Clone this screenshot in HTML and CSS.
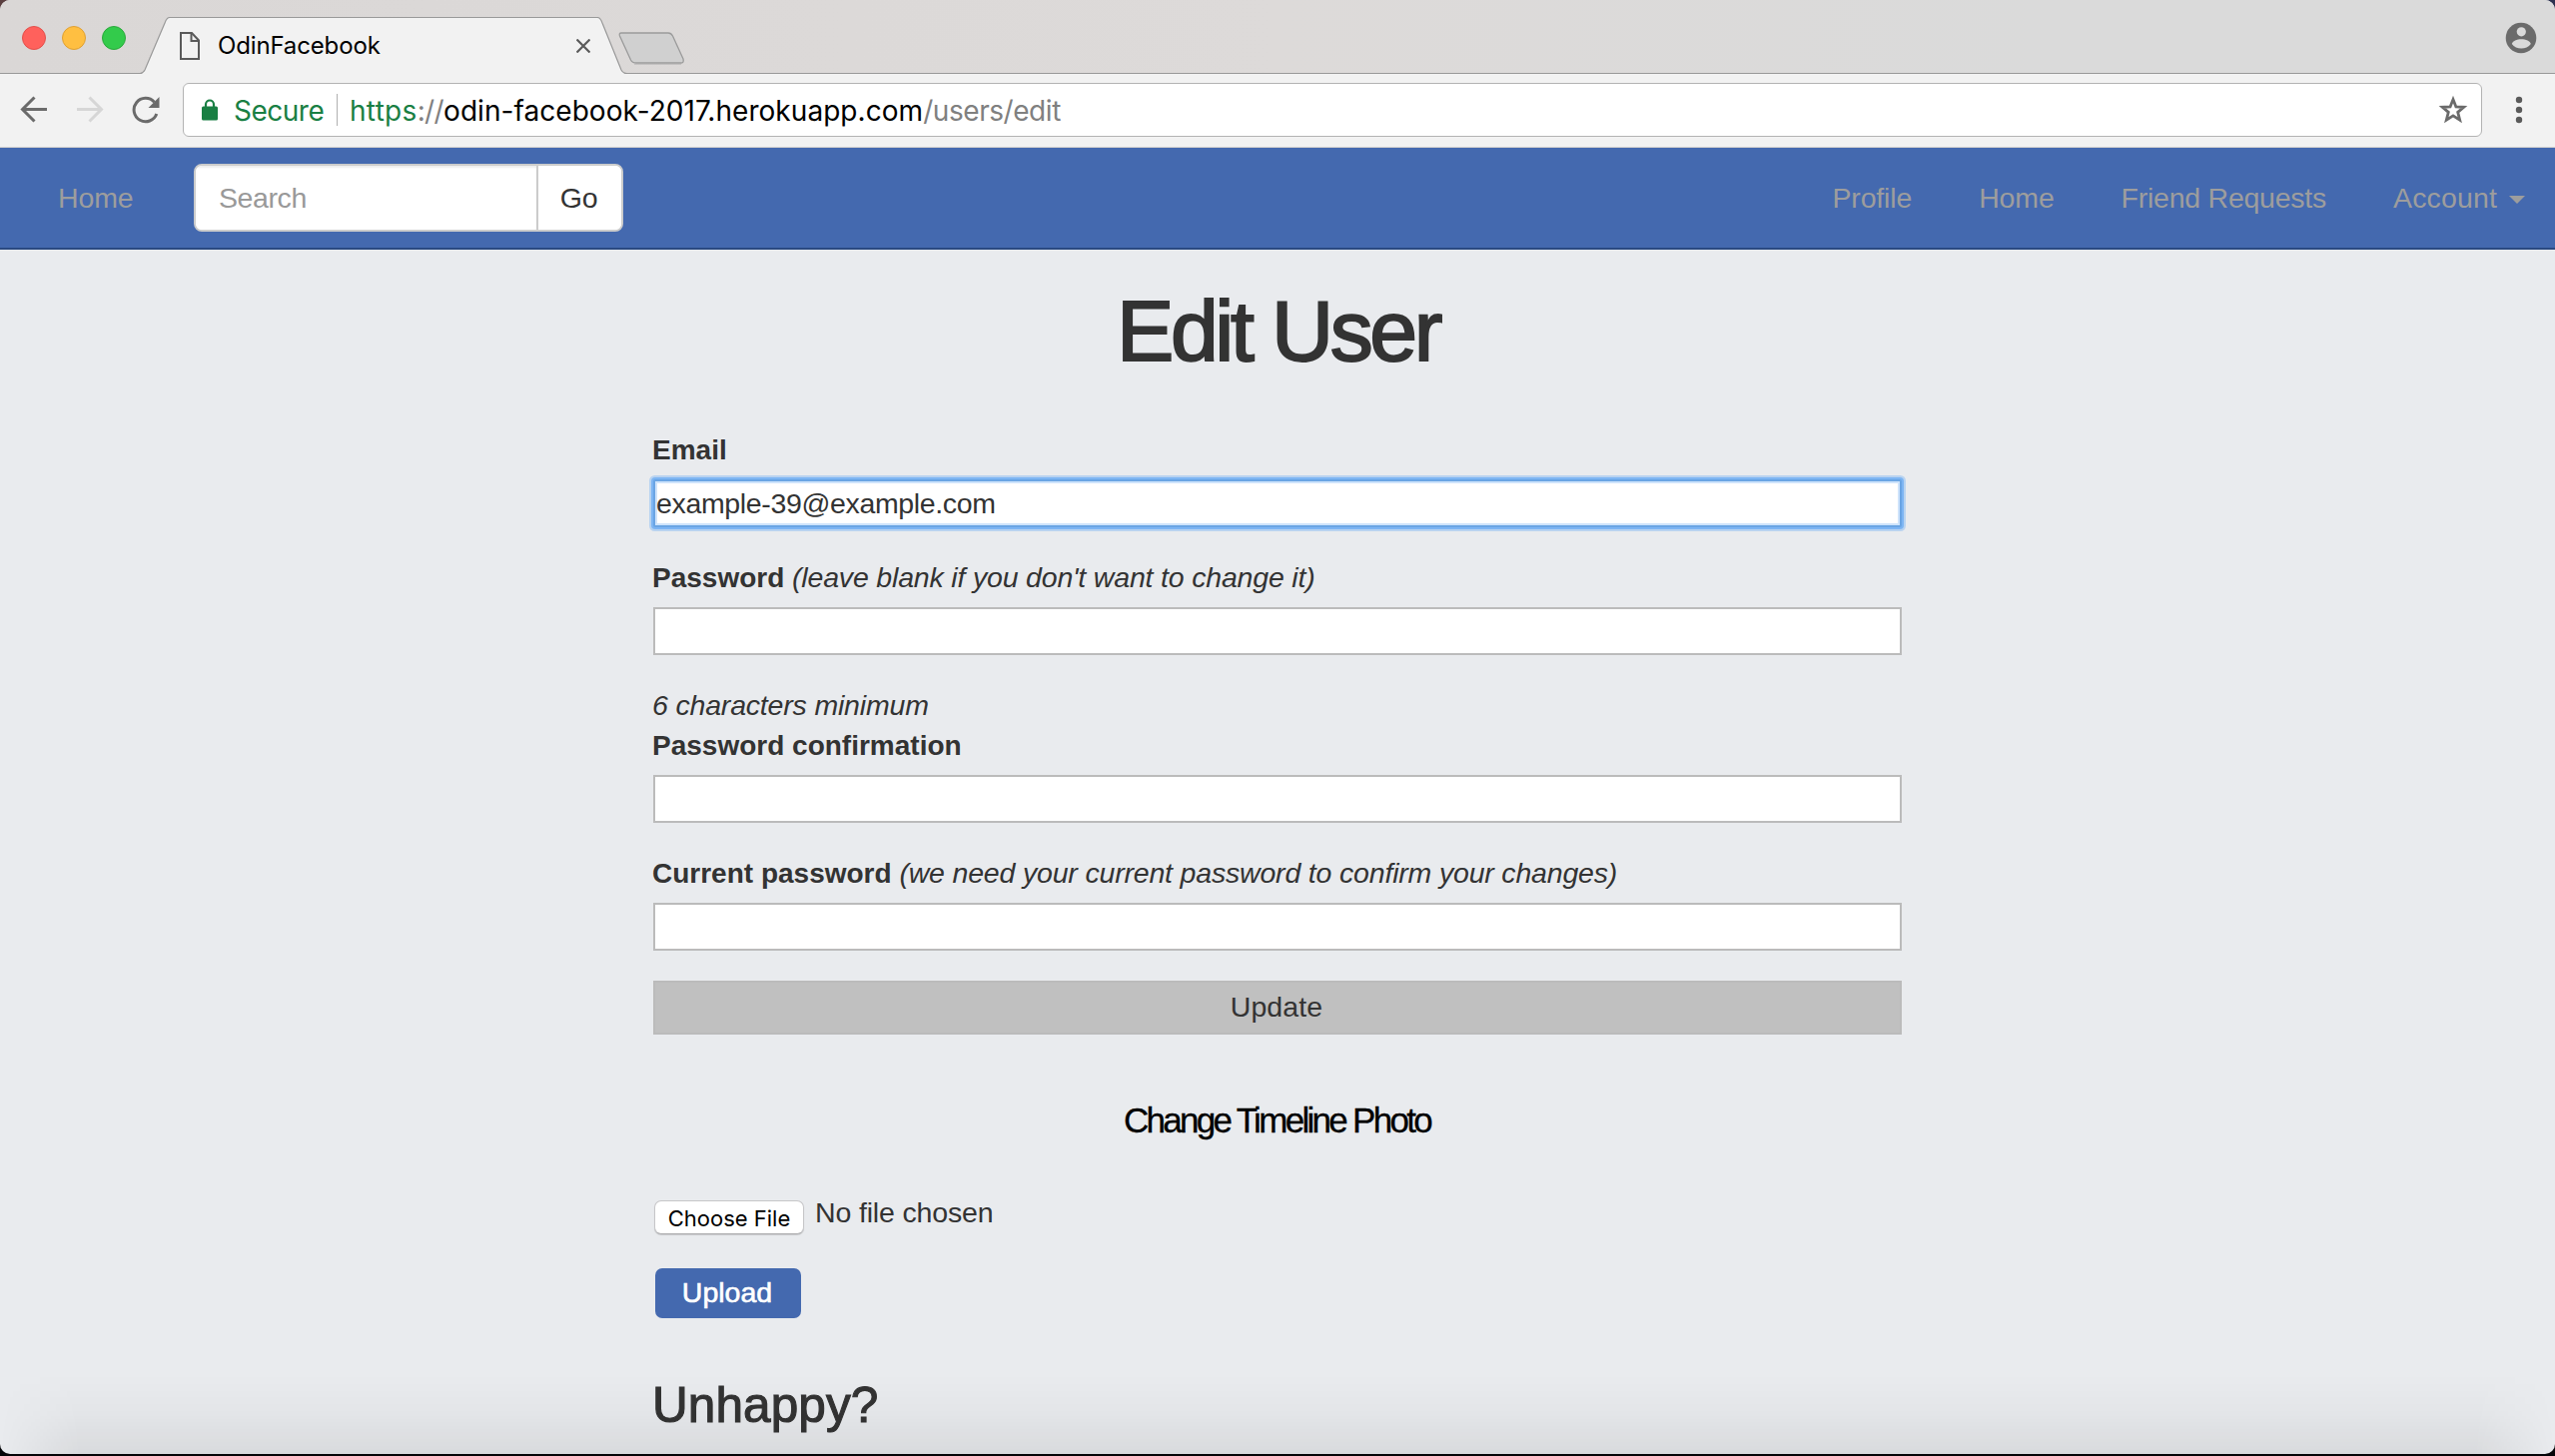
FILE: index.html
```
<!DOCTYPE html>
<html lang="en">
<head>
<meta charset="utf-8">
<title>OdinFacebook</title>
<link rel="stylesheet" href="styles.css">
</head>
<body>
<div class="window">
  <div class="tab-strip">
    <div class="lights">
      <span class="light light-close"></span>
      <span class="light light-min"></span>
      <span class="light light-max"></span>
    </div>
    <div class="tab">
      <svg class="tab-shape" width="488" height="58" viewBox="0 0 488 58">
        <path d="M0 58 Q3 57 5 53 L25 6 Q27 .5 30 .5 H458 Q461 .5 463 6 L482 53 Q484 57 488 58Z" fill="#f2f2f2"/>
        <path d="M0 56.5 Q3.500 56 5 53 L25 6 Q27 .5 30 .5 H458 Q461 .5 463 6 L482 53 Q484 56.500 488 56.5" fill="none" stroke="#999" stroke-width="1.2"/>
      </svg>
      <svg class="tab-page" width="20" height="28" viewBox="0 0 20 28" fill="none" stroke="#5a5a5a" stroke-width="2">
        <path d="M1 1H12L19 8.500V27H1Z"/><path d="M11.500 1V9H19"/>
      </svg>
      <span class="tab-title">OdinFacebook</span>
      <svg class="tab-close" width="14" height="14" viewBox="0 0 14 14" stroke="#5a5a5a" stroke-width="2.200"><path d="M.5 .5 13.500 13.500M13.500 .5.5 13.500"/></svg>
    </div>
    <svg class="new-tab" width="68" height="34" viewBox="0 0 68 34">
      <path d="M3 1H50Q53 1 54.500 4L65 27Q66 31 63 31H18Q14 31 12.500 28L1.500 4Q.5 1 3 1Z" fill="#d0d0d0" stroke="#9b9b9b" stroke-width="1.300"/>
      <path d="M16 32.500H63" stroke="#c4c2c2"/>
    </svg>
    <svg class="avatar" width="32" height="32" viewBox="0 0 32 32">
      <circle cx="16" cy="16" r="15.300" fill="#6b6b6b"/>
      <circle cx="16.300" cy="9.800" r="4.600" fill="#dadada"/>
      <path d="M6.800 22C8 15.500 24.600 15.500 25.800 22C21.500 28 11 28 6.800 22Z" fill="#dadada"/>
    </svg>
  </div>

  <div class="toolbar">
    <svg class="back" width="28" height="28" viewBox="0 0 28 28" fill="none" stroke="#6b6b6b" stroke-width="3"><path d="M27 13.500H3M14.500 1.500 2.500 13.500 14.500 25.500"/></svg>
    <svg class="forward" width="28" height="28" viewBox="0 0 28 28" fill="none" stroke="#d6d6d6" stroke-width="3"><path d="M1 13.500H25M13.500 1.500 25.500 13.500 13.500 25.500"/></svg>
    <svg class="reload" width="28" height="28" viewBox="0 0 28 28">
      <path d="M22.500 6.200A11.700 11.700 0 1 0 24.800 18" fill="none" stroke="#6b6b6b" stroke-width="3"/>
      <path d="M27.500 1V12H16.500Z" fill="#6b6b6b"/>
    </svg>
    <div class="omnibox">
      <svg class="lock" width="16" height="22" viewBox="0 0 16 22">
        <rect y="7.500" width="16" height="14" rx="1.500" fill="#197f43"/>
        <path d="M4 9V5.500a4 4 0 0 1 8 0V9" fill="none" stroke="#197f43" stroke-width="2.200"/>
      </svg>
      <span class="secure">Secure</span>
      <span class="divider"></span>
      <span class="url"><span class="scheme">https</span><span class="slashes">://</span><span class="host">odin-facebook-2017.herokuapp.com</span><span class="path">/users/edit</span></span>
      <svg class="star" width="30" height="30" viewBox="0 0 30 30" fill="none" stroke="#6b6b6b" stroke-width="2.800"><path d="M15 4.500 17.900 11.900 25.700 12.300 19.700 17.300 21.700 25.100 15 20.800 8.300 25.100 10.300 17.300 4.300 12.300 12.100 11.900Z"/></svg>
    </div>
    <svg class="kebab" width="8" height="28" viewBox="0 0 8 28" fill="#5a5a5a"><circle cx="4" cy="4" r="3.200"/><circle cx="4" cy="14" r="3.200"/><circle cx="4" cy="24" r="3.200"/></svg>
  </div>

  <nav class="navbar">
    <a class="nav-link brand">Home</a>
    <form class="search">
      <input class="search-input" type="text" placeholder="Search">
      <button class="search-go" type="button">Go</button>
    </form>
    <div class="nav-right">
      <a class="nav-link profile">Profile</a>
      <a class="nav-link nav-home">Home</a>
      <a class="nav-link requests">Friend Requests</a>
      <a class="nav-link account">Account<span class="caret"></span></a>
    </div>
  </nav>

  <main class="page">
    <h1 class="title">Edit User</h1>
    <form class="form">
      <div class="label"><b>Email</b></div>
      <input class="field focused" type="text" value="example-39@example.com">
      <div class="label"><b>Password</b> <i>(leave blank if you don't want to change it)</i></div>
      <input class="field" type="password">
      <div class="label"><i>6 characters minimum</i></div>
      <div class="label"><b>Password confirmation</b></div>
      <input class="field" type="password">
      <div class="label"><b>Current password</b> <i>(we need your current password to confirm your changes)</i></div>
      <input class="field" type="password">
      <button class="update" type="button">Update</button>
    </form>
    <h4 class="subtitle">Change Timeline Photo</h4>
    <div class="file-row">
      <button class="choose" type="button">Choose File</button>
      <span class="file-name">No file chosen</span>
    </div>
    <button class="upload" type="button">Upload</button>
    <h3 class="unhappy">Unhappy?</h3>
  </main>
  <div class="shade"></div>
</div>
</body>
</html>
```
FILE: styles.css
```
* { box-sizing: border-box; }
html { background: #050508; }
body {
  margin: 0;
  width: 2558px;
  height: 1458px;
  overflow: hidden;
  background: linear-gradient(90deg, #5b3f40, #2c3150) top / 100% 12px no-repeat, #050508;
  font: 28.5px/40px "Liberation Sans", Arial, sans-serif;
  letter-spacing: -0.15px;
  color: #333;
}
svg { display: block; flex: none; }
button, input { font: inherit; letter-spacing: inherit; color: inherit; margin: 0; padding: 0; display: block; border-radius: 0; }

.window {
  position: relative;
  height: 1456px;
  overflow: hidden;
  border-radius: 10px;
  background: #e9ebee;
}

/* browser tab strip */
.tab-strip {
  height: 74px;
  display: flex;
  align-items: flex-start;
  padding-left: 22px;
  background: linear-gradient(90deg, #dad7d6, #dddad9 50%, #dadada 80%);
  border-bottom: 1px solid #999;
  font-family: Inter, sans-serif;
}
.lights { display: flex; gap: 16px; padding-top: 26px; width: 118px; }
.light { width: 24px; height: 24px; border-radius: 50%; border: 1px solid; }
.light-close { background: #ff615c; border-color: #e2504b; }
.light-min { background: #ffbf41; border-color: #dfa033; }
.light-max { background: #33cb4b; border-color: #2aa93b; }
.tab { position: relative; width: 488px; height: 58px; margin-top: 17px; display: flex; }
.tab-shape { position: absolute; left: 0; top: 0; }
.tab-page { position: relative; margin: 15px 0 0 40px; }
.tab-title {
  position: relative;
  width: 377px;
  padding-left: 18px;
  font-size: 24px;
  line-height: 58px;
  letter-spacing: -0.15px;
  color: #000;
}
.tab-close { position: relative; margin-top: 22px; }
.new-tab { margin: 32px 0 0 -9px; }
.avatar { margin: 22px 18px 0 auto; }

/* browser toolbar */
.toolbar {
  height: 74px;
  display: flex;
  align-items: center;
  padding: 0 32px 2px 20px;
  background: #f2f2f2;
  border-bottom: 1px solid #d0cfcf;
  font-family: Inter, sans-serif;
  font-size: 28px;
}
.forward { margin-left: 28px; }
.reload { margin-left: 28px; }
.omnibox {
  width: 2302px;
  height: 54px;
  margin-left: 23px;
  display: flex;
  align-items: center;
  background: #fff;
  border: 1px solid #b3b3b3;
  border-radius: 6px;
}
.lock { margin-left: 18px; }
.secure { margin-left: 15px; width: 104px; padding: 2px 0 0 1px; color: #197f43; letter-spacing: -0.5px; }
.divider { width: 1px; height: 32px; background: #b0b0b0; }
.url { margin-left: 12px; padding-top: 2px; display: flex; white-space: nowrap; }
.scheme { color: #197f43; letter-spacing: 0.3px; }
.slashes { color: #808080; letter-spacing: -0.6px; }
.host { color: #000; letter-spacing: 0.05px; }
.path { color: #808080; letter-spacing: -0.44px; }
.star { margin-left: auto; margin-right: 13px; }
.kebab { margin-left: 33px; }

/* site navigation */
.navbar {
  height: 102px;
  display: flex;
  align-items: center;
  padding: 0 30px 0 58px;
  background: #4469af;
  border-bottom: 2px solid #2b4a82;
}
.nav-link { color: #9d9d9d; }
.brand { width: 136px; }
.search {
  display: flex;
  width: 430px;
  height: 68px;
  background: #fff;
  border: 2px solid #ccc;
  border-radius: 8px;
  overflow: hidden;
}
.search-input {
  width: 343px;
  border: 0;
  border-right: 2px solid #ccc;
  padding-left: 23px;
  letter-spacing: -0.4px;
  background: #fff;
  box-shadow: inset 0 2px 2px rgba(0, 0, 0, 0.075);
}
.search-input::placeholder { color: #999; opacity: 1; }
.search-go { flex: 1; border: 0; padding-right: 2px; background: #fff; }
.nav-right { margin-left: auto; display: flex; gap: 67px; }
.requests { letter-spacing: -0.25px; }
.account { display: flex; align-items: center; letter-spacing: 0.15px; }
.caret { margin: 4px 0 0 12px; border: 8px solid transparent; border-top-color: #9d9d9d; border-bottom: 0; }

/* page content */
.page { width: 1253px; margin: 0 auto 0 653px; }
.title {
  margin: 33px 0 51px;
  font-size: 86px;
  line-height: 96px;
  font-weight: 400;
  letter-spacing: -3.4px;
  text-align: center;
  -webkit-text-stroke: 2px #333;
}
.form { display: flex; flex-direction: column; }
.label { height: 40px; white-space: nowrap; }
.label b { font-size: 28px; letter-spacing: 0; }
.label i { letter-spacing: -0.18px; }
.field {
  width: 1250px;
  height: 48px;
  margin: 10px 0 30px 1px;
  padding: 0 2px;
  border: 2px solid #bbb;
  background: #fff;
}
.focused {
  padding-left: 1px;
  letter-spacing: -0.35px;
  outline: 0;
  border: 2px solid #6aa5e4;
  border-radius: 2px;
  box-shadow: 0 0 0 2px #7db5f3, 0 0 0 4px #b9d3f0, inset 0 0 0 2px #cfe4fb;
}
.update {
  width: 1250px;
  height: 54px;
  margin-left: 1px;
  padding: 0 2px 2px 0;
  border: 2px solid #bbb;
  background: #c0c0c0;
  letter-spacing: 0.1px;
}
.subtitle {
  margin: 64px 2px 58px 0;
  font-size: 35px;
  line-height: 44px;
  font-weight: 400;
  letter-spacing: -2.7px;
  text-align: center;
  color: #000;
  -webkit-text-stroke: 0.3px #000;
}
.file-row { display: flex; align-items: flex-start; margin-left: 2px; height: 34px; }
.choose {
  width: 150px;
  height: 34px;
  background: #fff;
  border: 1px solid #c6c6c8;
  border-bottom-color: #adadaf;
  border-radius: 7px;
  box-shadow: 0 1px 1px rgba(0, 0, 0, 0.15);
  font: 22px/34px Inter, sans-serif;
  letter-spacing: 0;
  color: #000;
}
.file-name { margin-left: 11px; line-height: 24px; }
.upload {
  width: 146px;
  height: 50px;
  margin: 34px 0 0 3px;
  padding: 0 2px 2px 0;
  border: 0;
  border-radius: 7px;
  background: #4469af;
  color: #fff;
  letter-spacing: 0;
  -webkit-text-stroke: 0.6px #fff;
}
.unhappy {
  margin: 59px 0 0;
  font-size: 49.5px;
  line-height: 56px;
  font-weight: 400;
  letter-spacing: 0.1px;
  -webkit-text-stroke: 1.1px #333;
}
/* soft darkening along the lower edge of the window */
.shade {
  position: absolute;
  left: 0;
  right: 0;
  bottom: 0;
  height: 80px;
  background: linear-gradient(rgba(0, 0, 0, 0), rgba(0, 0, 0, 0.025) 50%, rgba(0, 0, 0, 0.07));
  -webkit-mask-image: linear-gradient(90deg, transparent, #000 80px, #000 2478px, transparent);
  mask-image: linear-gradient(90deg, transparent, #000 80px, #000 2478px, transparent);
}
```
